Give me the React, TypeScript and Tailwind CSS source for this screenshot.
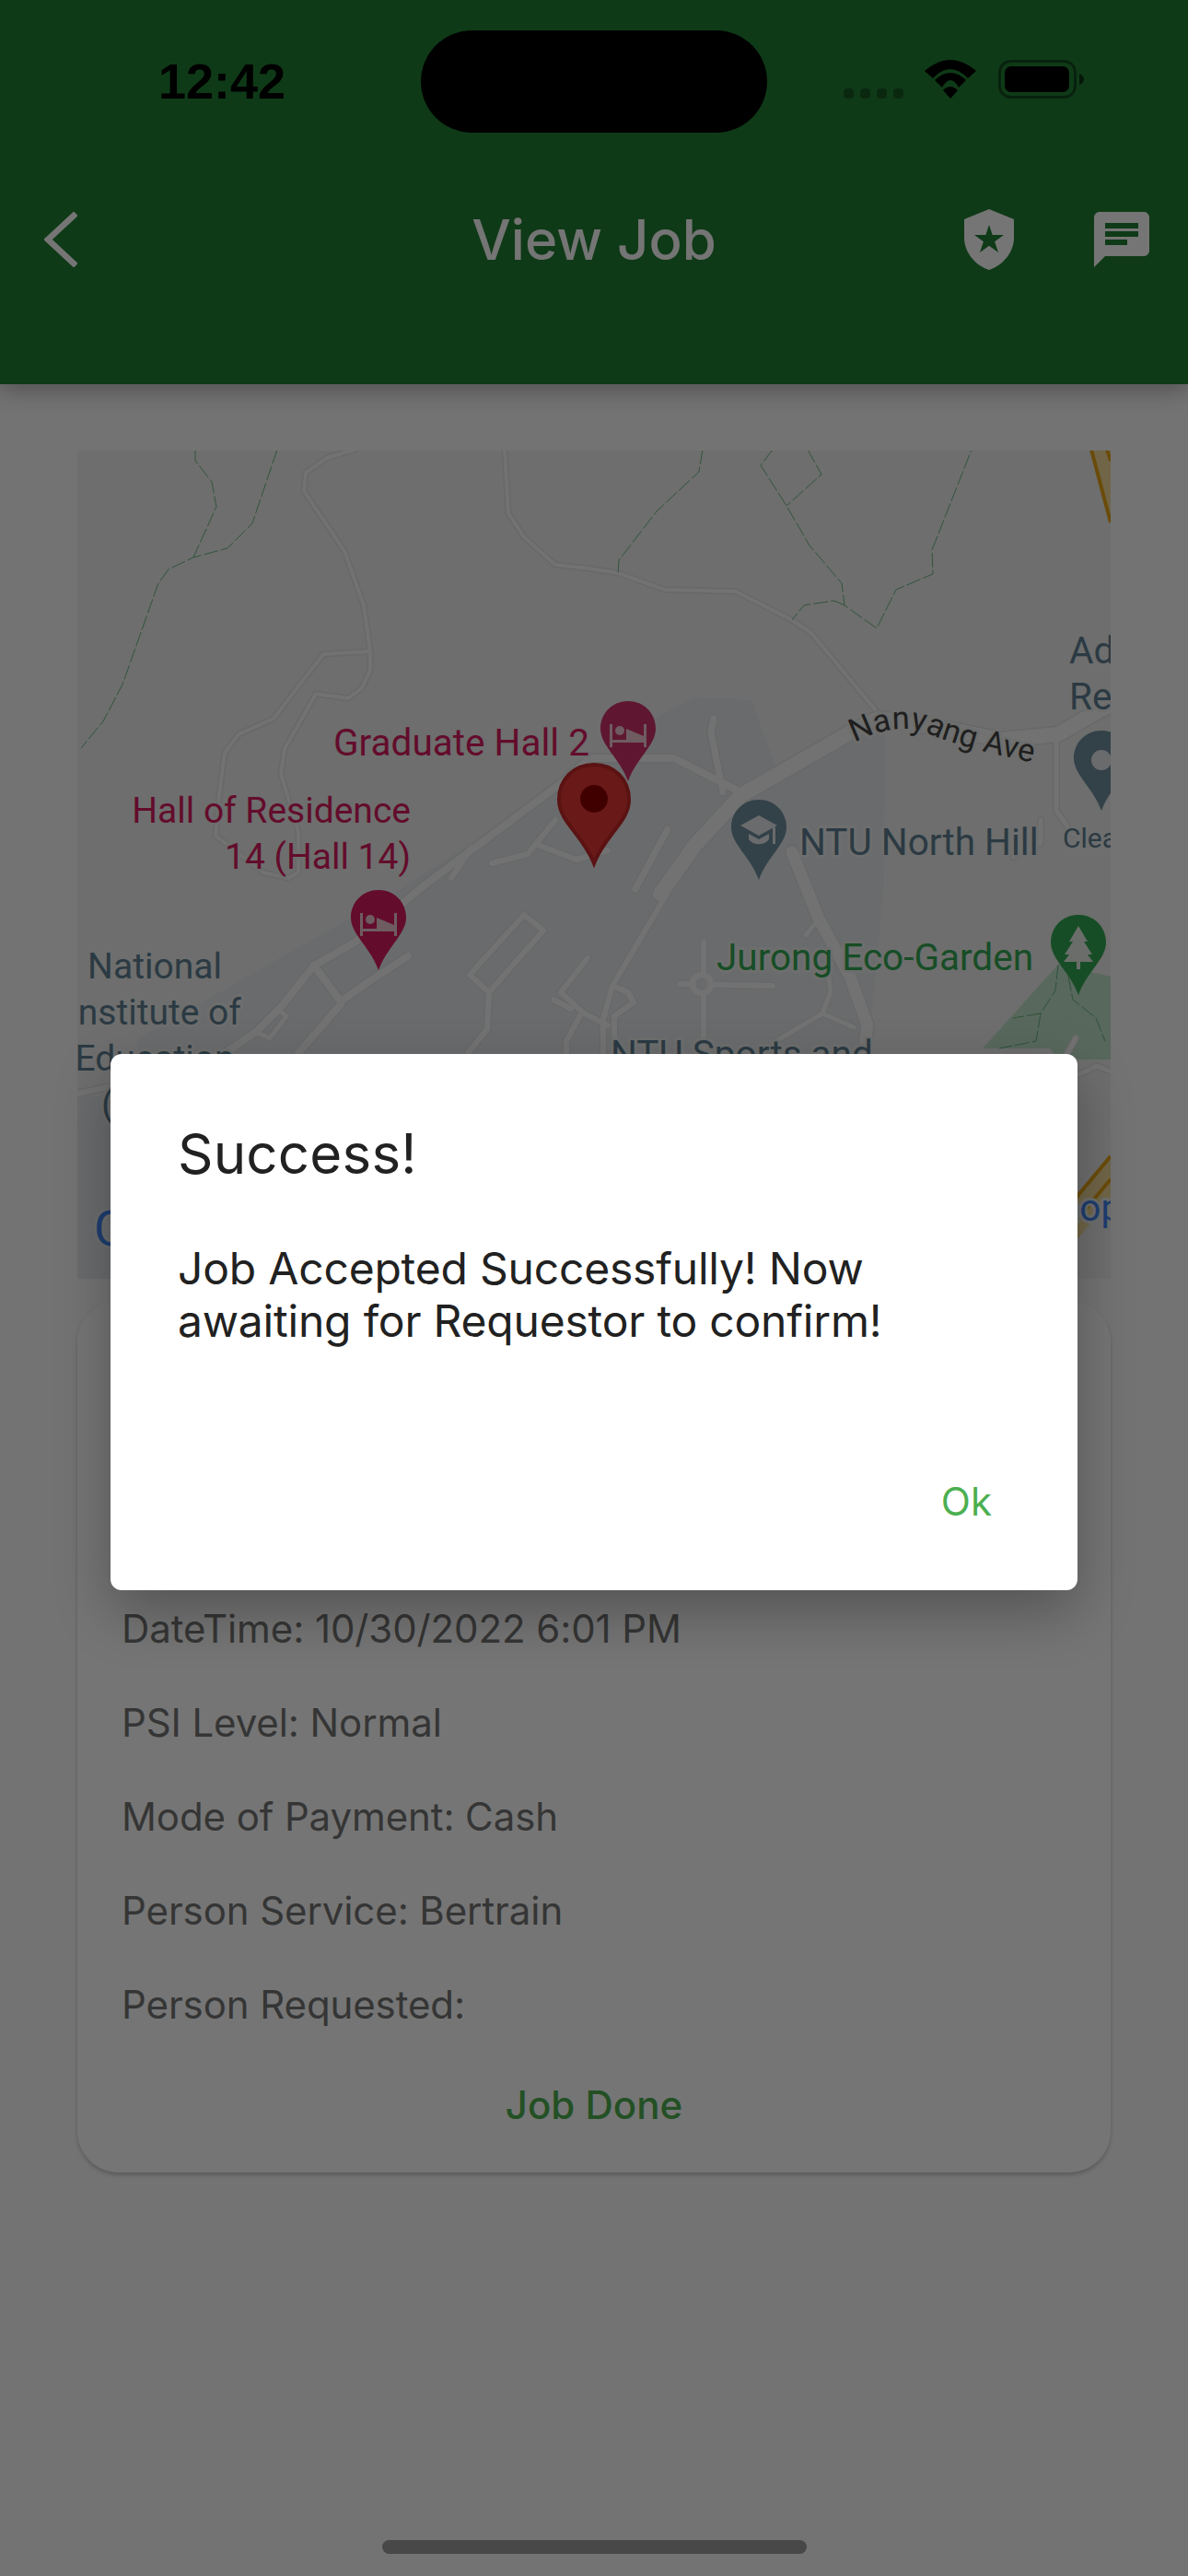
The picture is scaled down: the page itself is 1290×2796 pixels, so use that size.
const roads: { points: string; width: number }[] = [
  // thin service roads, north part of the map
  { points: '385,488 355,497 332,513 330,533 374,598 395,657 402,707 402,727 393,747 378,758 343,753 309,813 305,840 324,903 324,947 313,953 286,947', width: 4 },
  { points: '402,707 351,710 297,780 259,797 244,817 238,863 234,907 286,947', width: 4 },
  { points: '548,488 552,557 569,583 603,613 640,617 671,622 722,640 799,642 860,673 881,687 950,770', width: 4 },
  // campus roads
  { points: '640,823 612,848 462,960 385,1023 341,1048 305,1093 278,1120 190,1180', width: 8 },
  { points: '443,1038 404,1063 370,1087 341,1048', width: 8 },
  { points: '370,1090 324,1143', width: 8 },
  { points: '301,1095 311,1103 293,1127 278,1120', width: 5 },
  { points: '569,993 590,1010 531,1077 510,1058 569,993', width: 6 },
  { points: '531,1077 529,1117 508,1143', width: 6 },
  { points: '638,1040 609,1077 634,1100 660,1113', width: 6 },
  { points: '601,1085 620,1095', width: 6 },
  { points: '630,1102 615,1130 615,1143', width: 6 },
  { points: '84,1187 117,1180', width: 6 },
  { points: '640,823 732,823 799,857', width: 8 },
  { points: '775,780 772,795 785,860', width: 7 },
  { points: '534,937 573,927 603,890', width: 6 },
  { points: '490,953 512,920', width: 6 },
  { points: '584,917 626,933 660,923', width: 6 },
  { points: '690,965 725,900', width: 7 },
  { points: '726,967 665,1070 655,1107 655,1143', width: 6 },
  { points: '665,1070 682,1077 688,1088 667,1103 667,1143', width: 6 },
  { points: '764,1022 764,1140', width: 6 },
  { points: '738,1068 839,1070', width: 6 },
  { points: '900,1060 902,1077 893,1100 843,1130', width: 5 },
  { points: '893,1100 927,1115', width: 5 },
  { points: '889,998 875,1015', width: 5 },
  { points: '1168,1127 1157,1147', width: 5 },
  { points: '1170,1167 1191,1157 1206,1163', width: 5 },
  // Nanyang Ave and the road running south
  { points: '1206,765 1187,775 1149,797 1088,803 1023,790 954,780 927,793 805,863 755,917 717,970', width: 16 },
  { points: '860,925 889,997 923,1060 942,1113 938,1143', width: 13 },
  { points: '1147,800 1147,880 1165,905', width: 5 },
  { points: '1130,890 1130,915 1100,930', width: 5 },
]

const trails = [
  '212,488 212,500 230,523 235,550 210,605',
  '301,488 274,568 247,595 210,605 183,618 172,633 133,743 112,783 88,812',
  '763,488 759,512 713,555 672,608 671,623',
  '839,488 826,505 854,549 879,592 914,633 917,657 952,682 973,640 1013,623 1012,597 1055,488',
  '877,488 892,515 854,549',
  '917,657 906,652 873,657 860,673',
  '1149,1047 1146,1075 1130,1100 1100,1105',
  '1130,1100 1125,1130 1085,1138',
  '1160,1060 1165,1085 1190,1105 1200,1130',
]

const PIN = 'M0 0C-17 0 -30 13 -30 30C-30 48 -9 62 0 87C9 62 30 48 30 30C30 13 17 0 0 0Z'

function Bed() {
  return (
    <g fill="#f0c8d4">
      <rect x="-20" y="25" width="3" height="25" />
      <rect x="17" y="25" width="3" height="25" />
      <rect x="-20" y="42" width="40" height="3" />
      <circle cx="-9" cy="32" r="5" />
      <path d="M-2 30L17 38V42H-2Z" />
    </g>
  )
}

function GoogleMap() {
  const labelClass = 'font-[Roboto,sans-serif] text-[40.5px]'
  const halo = { paintOrder: 'stroke', stroke: '#eef0ee', strokeWidth: 6, strokeLinejoin: 'round' } as const

  return (
    <svg viewBox="84 489 1122 899" className="block w-full h-full">
      <rect x="84" y="489" width="1122" height="899" fill="#edf0ed" />
      {/* campus area */}
      <path d="M660 820L709 780L755 757L816 760L843 833L955 775L961 798L960 960L946 1110L940 1400H84V1190L145 1190L150 1127L427 970Z" fill="#e8eaee" />
      {/* park */}
      <path d="M1067 1138L1149 1047L1206 1060V1150H1150L1140 1138Z" fill="#c0e2c8" />
      {/* expressway */}
      <path d="M1206 1255L1150 1320V1370L1206 1300Z" fill="#f3dd9c" />
      <path d="M1206 1255L1150 1322M1206 1280L1150 1347" stroke="#e8a317" strokeWidth="4" fill="none" />
      <path d="M1185 488L1206 567V488Z" fill="#f3dd9c" />
      <path d="M1185 488L1206 567M1202 488L1206 500" stroke="#e8a317" strokeWidth="4" fill="none" />

      {roads.map((road) => (
        <polyline key={road.points} points={road.points} fill="none" stroke="#e0e2e3" strokeWidth={road.width + 3} strokeLinejoin="round" strokeLinecap="round" />
      ))}
      {roads.map((road) => (
        <polyline key={road.points} points={road.points} fill="none" stroke="#f8f8f8" strokeWidth={road.width} strokeLinejoin="round" strokeLinecap="round" />
      ))}
      <circle cx="762" cy="1068" r="10" fill="#e8eaee" stroke="#f8f8f8" strokeWidth="6" />
      {trails.map((trail) => (
        <polyline key={trail} points={trail} fill="none" stroke="#4fa86c" strokeOpacity="0.8" strokeWidth="1" strokeDasharray="16 3" />
      ))}

      {/* pink hotel pins */}
      <g transform="translate(682 761)">
        <path d={PIN} fill="#d0326b" />
        <Bed />
      </g>
      <g transform="translate(411 966)">
        <path d={PIN} fill="#d81b60" />
        <Bed />
      </g>

      {/* slate pins */}
      <g transform="translate(824 868)">
        <path d={PIN} fill="#6f8f9f" />
        <path d="M0 17L20 28L0 39L-20 28Z M-11 37V43C-6 50 6 50 11 43V37L0 43Z" fill="#e6eaec" />
        <rect x="15" y="30" width="3" height="18" fill="#e6eaec" />
      </g>
      <g transform="translate(1196 793)">
        <path d={PIN} fill="#6f8f9f" />
        <circle cx="0" cy="32" r="11" fill="#e6eaec" />
      </g>

      {/* tree pin */}
      <g transform="translate(1171 993)">
        <path d={PIN} fill="#34a853" />
        <path d="M0 12L10 29H6L15 43H10L16 51H2V59H-2V51H-16L-10 43H-15L-6 29H-10Z" fill="#e6eee8" />
      </g>

      {/* selected location pin */}
      <g transform="translate(645 828)">
        <path d="M0 2C-22 2 -38 18 -38 40C-38 64 -12 78 0 109C12 78 38 64 38 40C38 18 22 2 0 2Z" fill="#e53935" stroke="#c62828" strokeWidth="4" />
        <circle cx="0" cy="39" r="15" fill="#8e0000" />
      </g>

      <g className={labelClass} style={halo}>
        <text x="362" y="820" fill="#d81b60">Graduate Hall 2</text>
        <text x="446" y="893" fill="#d81b60" textAnchor="end" className="text-[39px]">Hall of Residence</text>
        <text x="446" y="943" fill="#d81b60" textAnchor="end" className="text-[39px]">14 (Hall 14)</text>
        <text x="868" y="928" fill="#5f7f92">NTU North Hill</text>
        <text x="1161" y="720" fill="#5f7f92">Ad</text>
        <text x="1161" y="770" fill="#5f7f92">Re</text>
        <text x="168" y="1062" fill="#5f7f92" textAnchor="middle" className="text-[39px]">National</text>
        <text x="168" y="1112" fill="#5f7f92" textAnchor="middle" className="text-[39px]">Institute of</text>
        <text x="168" y="1162" fill="#5f7f92" textAnchor="middle" className="text-[39px]">Education</text>
        <text x="110" y="1212" fill="#5f7f92">(</text>
        <text x="663" y="1158" fill="#5f7f92">NTU Sports and</text>
        <text x="778" y="1053" fill="#34a853">Jurong Eco-Garden</text>
        <text x="1150" y="1325" fill="#4285f4">hop</text>
        <text x="102" y="1352" fill="#4285f4" className="text-[54px]">G</text>
      </g>
      <text x="1154" y="920" fill="#5f7f92" className="font-[Roboto,sans-serif] text-[30px]" style={halo}>Clea</text>
      <path id="nanyang" d="M928 806Q975 782 1010 797T1128 829" fill="none" />
      <text fill="#444444" className="font-[Roboto,sans-serif] text-[34.5px]" style={halo}>
        <textPath href="#nanyang">Nanyang Ave</textPath>
      </text>
    </svg>
  )
}

export default function App() {
  const details = [
    'DateTime: 10/30/2022 6:01 PM',
    'PSI Level: Normal',
    'Mode of Payment: Cash',
    'Person Service: Bertrain',
    'Person Requested:',
  ]

  return (
    <div className="relative w-[1290px] h-[2796px] overflow-hidden bg-[#fafafa] font-[Inter,sans-serif]">
      {/* Header */}
      <header className="relative z-10 h-[417px] bg-[#217e34] pt-[33px] shadow-[0_6px_24px_rgba(0,0,0,0.3)]">
        <div className="grid grid-cols-[457px_376px_1fr] h-[111px]">
          <div className="flex items-center pl-[172px] pb-[2px] font-['Liberation_Sans',sans-serif] text-[54px] font-bold leading-none text-black">
            12:42
          </div>
          <div className="rounded-full bg-black" />
          <div className="flex items-end pl-[83px] pb-[37px]">
            <div className="flex gap-[7px]">
              <div className="w-[11px] h-[11px] rounded-[4px] bg-black/30" />
              <div className="w-[11px] h-[11px] rounded-[4px] bg-black/30" />
              <div className="w-[11px] h-[11px] rounded-[4px] bg-black/30" />
              <div className="w-[11px] h-[11px] rounded-[4px] bg-black/30" />
            </div>
            <svg viewBox="0 0 58 42" className="ml-[22px] w-[58px] h-[42px]">
              <path d="M1 12Q29 -12 57 12L48 20Q29 0 10 20Z" />
              <path d="M12 22Q29 6 46 22L38 30Q29 14 20 30Z" />
              <path d="M21 33Q29 25 37 33L29 42Z" />
            </svg>
            <svg viewBox="0 0 93 42" className="ml-[23px] w-[93px] h-[42px]">
              <rect x="1.5" y="1.5" width="82" height="39" rx="12" fill="none" stroke="#000000" strokeOpacity="0.4" strokeWidth="3" />
              <rect x="7" y="7" width="70" height="28" rx="7" />
              <path d="M88 15C91 16 93 18 93 21C93 24 91 26 88 27Z" fillOpacity="0.6" />
            </svg>
          </div>
        </div>

        <div className="grid grid-cols-[1fr_auto_1fr] items-center h-[72px] mt-[80px]">
          <div className="pl-[48px]">
            <svg viewBox="0 0 36 60" className="w-[36px] h-[60px]" fill="none" stroke="#ffffff" strokeWidth="6.5" strokeLinecap="square">
              <path d="M32 4L4 30L32 56" />
            </svg>
          </div>
          <h1 className="text-[60px] font-medium leading-[72px] text-white">View Job</h1>
          <div className="flex items-center justify-end gap-[87px] pr-[42px]">
            <svg viewBox="0 0 54 66" className="w-[54px] h-[66px]" fill="#ffffff">
              <path
                fillRule="evenodd"
                d="M27 0L54 11V31C54 47 42 61 27 66C12 61 0 47 0 31V11ZM27 17L23.3 28H11L20.9 35.3L17 47L27 39.7L37 47L33.1 35.3L43 28H30.7Z"
              />
            </svg>
            <svg viewBox="0 0 60 60" className="w-[60px] h-[60px]" fill="#ffffff">
              <path
                fillRule="evenodd"
                d="M6 0H54C57.3 0 60 2.700 60 6V42C60 45.300 57.300 48 54 48H12L0 60V6C0 2.700 2.700 0 6 0ZM12 12V18H48V12ZM12 21V27H48V21ZM12 30V36H36V30Z"
              />
            </svg>
          </div>
        </div>
      </header>

      {/* Map */}
      <div className="mt-[72px] mx-[84px] h-[899px] overflow-hidden">
        <GoogleMap />
      </div>

      {/* Job details card */}
      <div className="mt-[24px] mx-[84px] h-[946px] rounded-[45px] bg-white shadow-[0_3px_4px_rgba(0,0,0,0.2)] flex flex-col justify-end px-[48px] pb-[38px]">
        {details.map((line) => (
          <p key={line} className="h-[102px] flex items-center text-[42px] tracking-[-0.1px] text-[#757575]">
            {line}
          </p>
        ))}
        <button className="mt-[22px] h-[72px] text-[42px] font-medium text-[#4caf50]">Job Done</button>
      </div>

      {/* Dialog */}
      <div className="absolute inset-0 z-20 flex flex-col items-center bg-black/54 pt-[1144px] pb-[24px]">
        <div className="w-[1050px] h-[582px] rounded-[12px] bg-white pt-[72px] pl-[73px] pr-[93px] shadow-[0_24px_60px_rgba(0,0,0,0.28)]">
          <h2 className="text-[60px] leading-[72px] tracking-[0.2px] text-[#212121]">Success!</h2>
          <p className="mt-[60px] text-[48px] leading-[57px] tracking-[-0.2px] text-[#212121]">
            Job Accepted Successfully! Now awaiting for Requestor to confirm!
          </p>
          <div className="mt-[138px] flex justify-end">
            <span className="text-[42px] leading-[60px] text-[#4caf50]">Ok</span>
          </div>
        </div>
        <div className="mt-auto w-[461px] h-[15px] rounded-full bg-[#484848]" />
      </div>
    </div>
  )
}
